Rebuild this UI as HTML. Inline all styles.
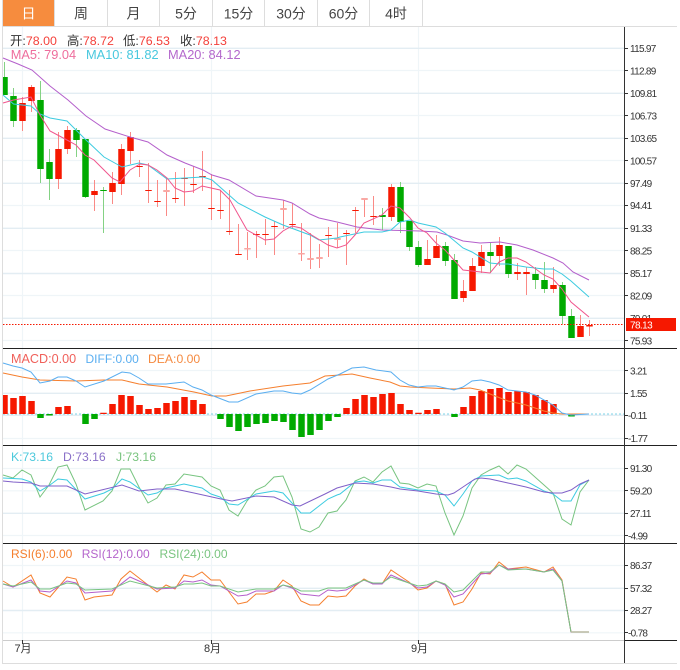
<!DOCTYPE html>
<html><head><meta charset="utf-8"><style>
html,body{margin:0;padding:0;background:#fff;width:680px;height:670px;overflow:hidden}
svg{display:block}
text{font-family:"Liberation Sans","Noto Sans CJK SC",sans-serif}
.t{font-size:14px;fill:#444;text-anchor:middle}
.a text,.a{font-size:10px;fill:#333;letter-spacing:-.7px}
.h{font-size:12px}
.g1{stroke:#e3edf3;stroke-width:1.4;fill:none}
.g2{stroke:#eff5f8;stroke-width:1.2;fill:none}
polyline{fill:none;stroke-width:1}
</style></head><body>
<svg width="680" height="670" viewBox="0 0 680 670" xmlns="http://www.w3.org/2000/svg">
<rect width="680" height="670" fill="#fff"/>
<!-- tabs -->
<rect x="3" y="0" width="51" height="26" fill="#f68c3e"/>
<path d="M54.5 0V26M107.5 0V26M159.5 0V26M212.5 0V26M264.5 0V26M317.5 0V26M369.5 0V26M422.5 0V26" stroke="#ddd" fill="none"/>
<path d="M2.5 0V663.5H677M2 26.5H677" stroke="#ddd" fill="none"/>
<text class="t" x="28.5" y="18.5" style="fill:#fff">日</text>
<text class="t" x="81" y="18.5">周</text>
<text class="t" x="133.5" y="18.5">月</text>
<text class="t" x="186" y="18.5">5分</text>
<text class="t" x="238.5" y="18.5">15分</text>
<text class="t" x="291" y="18.5">30分</text>
<text class="t" x="343.5" y="18.5">60分</text>
<text class="t" x="396" y="18.5">4时</text>
<!-- grid -->
<path class="g2" d="M22.5 27V640M211.5 27V640M418.5 27V640"/>
<path class="g1" d="M3 48.3H624M3 93.3H624M3 138.3H624M3 183.3H624M3 228.3H624M3 273.5H624M3 318.3H624M3 393.3H624M3 415.3H624M3 513.3H624M3 588.3H624M3 610.5H624"/>
<path class="g2" d="M3 70.5H624M3 115.5H624M3 160.5H624M3 205.5H624M3 250.5H624M3 295.5H624M3 340.5H624M3 370.5H624M3 438.5H624M3 468.5H624M3 490.8H624M3 535.5H624M3 565.5H624M3 632.8H624"/>
<!-- wicks -->
<path stroke="#fa8a86" fill="none" d="M22.5 97V131M31.5 85V112M58.5 132V189M67.5 126V154M94.5 180V211M112.5 172V204M121.5 144V195M130.5 132V164M139.5 160V177M148.5 163V203M157.5 180V207M166.5 178V216M175.5 172V203M184.5 168V206M193.5 166V193M202.5 151V191M211.5 174V220M220.5 190V219M229.5 190V235M238.5 224V254M247.5 232V260M256.5 231V258M265.5 219V245M274.5 221V255M283.5 200V229M292.5 203V229M301.5 223V261M310.5 233V269M319.5 244V268M328.5 227V257M337.5 223V248M346.5 230V265M355.5 207V233M364.5 199V217M373.5 196V225M391.5 184V221M427.5 240V265M436.5 235V258M463.5 280V302M472.5 258V291M481.5 245V273M499.5 237V266M517.5 263V280M526.5 267V295M553.5 267V293M580.5 315V337M589.5 320V336"/>
<path stroke="#84d284" fill="none" d="M4.5 62V95M13.5 88V127M40.5 81V183M49.5 149V200M76.5 128V157M85.5 139V198M103.5 187V233M382.5 208V230M400.5 182V233M409.5 221V251M418.5 241V267M445.5 242V266M454.5 254V299M490.5 243V273M508.5 246V278M535.5 267V289M544.5 262V293M562.5 282V324M571.5 309V338"/>
<!-- bodies -->
<path fill="#f61800" d="M19.25 103h6.5v18h-6.5zM28.25 87h6.5v14h-6.5zM55.25 149h6.5v30h-6.5zM64.25 130h6.5v19h-6.5zM91.25 191h6.5v4h-6.5zM109.25 183h6.5v9h-6.5zM118.25 149h6.5v35h-6.5zM127.25 137h6.5v14h-6.5zM388.25 187h6.5v30h-6.5zM424.25 259h6.5v6h-6.5zM433.25 246h6.5v12h-6.5zM460.25 291h6.5v7h-6.5zM469.25 266h6.5v25h-6.5zM478.25 252h6.5v14h-6.5zM496.25 245h6.5v11h-6.5zM514.25 272h6.5v2h-6.5zM523.25 272h6.5v2h-6.5zM550.25 285h6.5v4h-6.5zM577.25 326h6.5v11h-6.5zM586.25 325h6.5v1.5h-6.5z
M136.25 166h6.5v1h-6.5zM145.25 190h6.5v1h-6.5zM154.25 201h6.5v1h-6.5zM172.25 198h6.5v1h-6.5zM181.25 178h6.5v1h-6.5zM190.25 184h6.5v1h-6.5zM199.25 176h6.5v1h-6.5zM208.25 208h6.5v1h-6.5zM217.25 210h6.5v1h-6.5zM226.25 231h6.5v1h-6.5zM235.25 254h6.5v1h-6.5zM253.25 234h6.5v1h-6.5zM262.25 234h6.5v1h-6.5zM271.25 226h6.5v1h-6.5zM289.25 224h6.5v1h-6.5zM325.25 235h6.5v1h-6.5zM343.25 233h6.5v1h-6.5zM352.25 210h6.5v1h-6.5zM370.25 216h6.5v1h-6.5z"/>
<path fill="#f9a8a4" d="M163.25 190h6.5v2h-6.5zM244.25 248h6.5v1.5h-6.5zM280.25 208h6.5v2h-6.5zM298.25 253h6.5v1.5h-6.5zM307.25 258h6.5v2h-6.5zM316.25 257h6.5v2h-6.5zM334.25 238h6.5v2h-6.5zM361.25 198h6.5v2h-6.5z"/>
<path fill="#00aa00" d="M3 77h4.75v18h-4.75zM10.25 96h6.5v25h-6.5zM37.25 100h6.5v69h-6.5zM46.25 162h6.5v17h-6.5zM73.25 130h6.5v10h-6.5zM82.25 139h6.5v58h-6.5zM100.25 190h6.5v1h-6.5zM379.25 215h6.5v2h-6.5zM397.25 187h6.5v35h-6.5zM406.25 221h6.5v26h-6.5zM415.25 247h6.5v18h-6.5zM442.25 246h6.5v15h-6.5zM451.25 260h6.5v39h-6.5zM487.25 252h6.5v4h-6.5zM505.25 246h6.5v28h-6.5zM532.25 274h6.5v6h-6.5zM541.25 280h6.5v9h-6.5zM559.25 285h6.5v31h-6.5zM568.25 316h6.5v22h-6.5z"/>
<!-- MAs -->
<polyline stroke="#b45fcb" points="3,58 18,64 32,70 50,86 68,100 86,116 105,129 130,137 148,142 167,155 185,163 203,170 212,175 229,180 256,196 283,200 292,203 310,214 319,218 337,222 357,227 382,230 420,231 437,232 447,235 463,241 480,243 500,242 517,245 533,250 553,258 563,263 573,272 589,280"/>
<polyline stroke="#3ccbe0" points="3,95 13.5,104 31,106 40,114 50,118 67,121 76,130 85,139 104,157 122,167 139,163 148,165 167,179 185,178 203,177 212,180 229,195 238,203 265,217 283,225 310,235 319,240 337,238 340,237 364,232 382,232 391,230 400,222 410,220 418,223 436,227 445,233 463,248 472,252 490,263 500,264 508,264 526,267 544,269 553,269 562,274 571,281 589,297"/>
<polyline stroke="#f0558d" points="3,103 13.5,100 31,97 40,115 50,131 67,140 76,145 85,155 94,160 104,170 112,178 120,182 130,170 140,164 148,165 157,170 167,178 175,188 184,192 193,191 202,186 211,188 220,190 230,200 247,230 265,240 274,239 283,231 292,226 301,228 310,234 328,245 337,248 346,245 355,235 364,223 382,215 391,206 400,208 410,218 418,228 427,233 436,243 445,250 454,260 463,270 481,272 490,273 499,262 508,258 517,258 526,262 544,275 553,279 562,289 571,302 589,317"/>
<path stroke="#f61800" stroke-dasharray="1.5 1.5" d="M3 324.5H625" fill="none"/>
<!-- MACD -->
<path stroke="#7fd4e8" stroke-dasharray="2 2" d="M3 414H625" fill="none"/>
<path fill="#f61800" d="M3 395h4.75v19h-4.75zM10.25 398h6.5v16h-6.5zM19.25 396h6.5v18h-6.5zM28.25 401h6.5v13h-6.5zM55.25 407h6.5v7h-6.5zM64.25 406h6.5v8h-6.5zM100.25 412.7h6.5v1.3h-6.5zM109.25 404h6.5v10h-6.5zM118.25 395h6.5v19h-6.5zM127.25 396h6.5v18h-6.5zM136.25 405h6.5v9h-6.5zM145.25 409h6.5v5h-6.5zM154.25 408h6.5v6h-6.5zM163.25 403h6.5v11h-6.5zM172.25 401h6.5v13h-6.5zM181.25 397h6.5v17h-6.5zM190.25 400h6.5v14h-6.5zM199.25 404h6.5v10h-6.5zM343.25 408h6.5v6h-6.5zM352.25 399h6.5v15h-6.5zM361.25 395h6.5v19h-6.5zM370.25 397h6.5v17h-6.5zM379.25 394h6.5v20h-6.5zM388.25 393h6.5v21h-6.5zM397.25 404h6.5v10h-6.5zM406.25 410h6.5v4h-6.5zM415.25 412.7h6.5v1.3h-6.5zM424.25 410h6.5v4h-6.5zM433.25 409h6.5v5h-6.5zM460.25 407h6.5v7h-6.5zM469.25 396h6.5v18h-6.5zM478.25 391h6.5v23h-6.5zM487.25 389h6.5v25h-6.5zM496.25 388h6.5v26h-6.5zM505.25 392h6.5v22h-6.5zM514.25 391h6.5v23h-6.5zM523.25 392h6.5v22h-6.5zM532.25 395h6.5v19h-6.5zM541.25 400h6.5v14h-6.5zM550.25 404h6.5v10h-6.5z"/>
<path fill="#00aa00" d="M37.25 414h6.5v4h-6.5zM46.25 414h6.5v1.5h-6.5zM82.25 414h6.5v10h-6.5zM91.25 414h6.5v5h-6.5zM217.25 414h6.5v5h-6.5zM226.25 414h6.5v13h-6.5zM235.25 414h6.5v17h-6.5zM244.25 414h6.5v13h-6.5zM253.25 414h6.5v10h-6.5zM262.25 414h6.5v9h-6.5zM271.25 414h6.5v7h-6.5zM280.25 414h6.5v8h-6.5zM289.25 414h6.5v16h-6.5zM298.25 414h6.5v23h-6.5zM307.25 414h6.5v21h-6.5zM316.25 414h6.5v16h-6.5zM325.25 414h6.5v7h-6.5zM334.25 414h6.5v3h-6.5zM451.25 414h6.5v3h-6.5zM568.25 414h6.5v2.5h-6.5z"/>
<polyline stroke="#f57f2e" points="3,373 22,377 40,380 76,381 104,380 122,380 139,384 167,387 194,392 212,396 226,396 250,391 283,386 310,383 325,376 340,375 352,374 370,378 390,382 400,386 410,387 430,388 454,389 470,388 480,390 490,394 508,401 526,405 544,411 553,413 562,414 589,414"/>
<polyline stroke="#5aaef0" points="3,363 13,366 22,368 31,372 40,383 50,381 58,377 67,377 76,381 85,387 104,381 122,372 130,373 139,378 148,384 166,384 184,382 193,387 202,390 211,395 229,402 238,402 256,394 274,391 283,391 292,393 301,394 310,390 328,379 340,374 352,368 364,367 376,370 391,372 400,380 409,385 418,387 427,386 436,386 445,388 454,390 463,387 472,381 481,380 490,382 499,385 508,390 526,392 535,395 553,405 562,413 571,415 589,414"/>
<!-- KDJ -->
<polyline stroke="#78c480" points="3,475 13,478 22,470 31,475 40,497 49,485 58,467 67,465 76,484 85,510 103,501 112,491 121,469 130,469 139,487 148,503 157,498 166,485 175,484 184,474 202,477 211,486 220,490 229,510 238,516 247,501 256,490 265,486 274,477 283,476 292,497 301,529 310,532 319,527 328,513 337,511 340,507 346,500 355,481 364,477 373,482 382,472 391,466 400,483 409,484 418,488 427,484 436,486 445,513 454,535 463,516 472,488 481,475 490,470 499,466 508,474 517,465 526,469 544,485 553,493 562,519 571,525 580,492 589,480"/>
<polyline stroke="#3ccbe0" points="3,478 22,479 31,482 40,491 50,485 58,479 67,480 85,499 104,493 112,489 122,479 130,482 148,495 157,493 166,488 184,484 202,488 211,494 220,497 229,504 238,505 256,494 274,491 283,493 301,513 310,513 328,499 337,495 340,494 355,482 364,481 373,483 382,480 391,480 400,487 418,490 436,491 445,495 454,506 463,494 472,481 481,476 499,475 508,479 517,478 526,481 544,491 553,494 562,501 571,501 580,485 589,480"/>
<polyline stroke="#8060c8" stroke-width="1.2" points="3,481 13,482 31,483 40,486 67,486 85,494 122,485 139,491 157,489 175,489 194,493 221,499 232,501 256,496 274,497 292,505 300,506 325,494 337,488 355,483 373,484 391,487 400,489 418,491 436,494 448,495 454,493 463,487 475,479 481,478 490,479 508,483 526,487 544,492 553,493 562,493 571,490 580,484 589,480"/>
<!-- RSI -->
<polyline stroke="#f57f2e" points="3,581 13,587 31,575 40,593 50,597 67,577 76,579 85,600 94,597 112,595 121,579 130,571 139,578 157,592 166,585 175,589 184,575 193,577 202,572 211,580 220,580 238,604 247,602 256,594 265,594 274,591 283,580 292,586 301,601 310,605 319,605 328,596 337,597 346,596 355,586 364,579 373,584 382,584 391,570 400,576 409,582 418,590 427,588 436,581 445,584 454,605 463,602 472,589 481,573 490,574 499,562 508,569 526,567 544,572 553,567 562,580 571,632 589,632"/>
<polyline stroke="#b45fcb" points="3,584 13,587 31,580 40,591 50,592 67,581 76,583 85,593 112,591 130,577 157,589 175,588 184,581 193,582 202,580 211,585 220,586 238,596 247,595 256,591 274,591 283,585 292,588 301,594 319,596 328,590 337,591 346,590 364,580 373,584 382,584 391,575 409,583 418,588 427,587 436,581 445,585 454,597 463,594 481,574 490,573 499,565 508,569 526,569 544,572 553,569 562,581 571,632 589,632"/>
<polyline stroke="#78c480" points="3,584 13,586 31,582 40,589 50,589 67,583 76,584 85,590 112,589 130,581 157,588 175,587 184,584 193,584 202,583 211,586 220,586 238,592 256,589 274,589 283,585 292,587 301,591 319,591 328,588 337,588 346,588 364,580 373,583 382,583 391,577 409,583 418,586 427,585 436,581 445,584 454,592 463,590 481,572 490,572 499,565 508,570 526,569 544,572 553,570 562,581 571,632"/>
<path stroke="#b8b8a0" stroke-width="1.6" d="M571 632H589" fill="none"/>
<!-- axes -->
<path stroke="#ccc" d="M3 640.5H624" fill="none"/>
<path stroke="#222" d="M3 348.5H677M3 445.5H677M3 543.5H677M625 640.5H677" fill="none"/>
<path stroke="#333" d="M624.5 27V663" fill="none"/>
<path stroke="#333" d="M625 48.5h3M625 70.5h3M625 93.5h3M625 115.5h3M625 138.5h3M625 160.5h3M625 183.5h3M625 205.5h3M625 228.5h3M625 250.5h3M625 273.5h3M625 295.5h3M625 340.5h3M625 370.5h3M625 393.5h3M625 415.5h3M625 438.5h3M625 468.5h3M625 490.5h3M625 513.5h3M625 535.5h3M625 565.5h3M625 588.5h3M625 610.5h3M625 632.5h3" fill="none"/>
<path stroke="#333" d="M22.5 640v4M211.5 640v4M418.5 640v4" fill="none"/>
<g class="a">
<text x="630" y="52">115.97</text><text x="630" y="74.5">112.89</text><text x="630" y="97">109.81</text><text x="630" y="119.5">106.73</text><text x="630" y="142">103.65</text><text x="630" y="164.5">100.57</text><text x="630" y="187">97.49</text><text x="630" y="209">94.41</text><text x="630" y="232">91.33</text><text x="630" y="254.5">88.25</text><text x="630" y="277">85.17</text><text x="630" y="299.5">82.09</text><text x="630" y="322">79.01</text><text x="630" y="344.5">75.93</text>
<text x="630" y="374.5">3.21</text><text x="630" y="397">1.55</text><text x="628" y="419">-0.11</text><text x="628" y="442">-1.77</text>
<text x="630" y="472">91.30</text><text x="630" y="494.5">59.20</text><text x="630" y="517">27.11</text><text x="628" y="539.5">-4.99</text>
<text x="630" y="569">86.37</text><text x="630" y="592">57.32</text><text x="630" y="614">28.27</text><text x="628" y="636.5">-0.78</text>
</g>
<rect x="626" y="318" width="50" height="13" fill="#f61800"/>
<text x="630" y="328.5" style="font-size:10px;letter-spacing:-.6px;fill:#fff">78.13</text>
<!-- headers -->
<g class="h">
<g style="font-size:12.4px">
<text x="10" y="45" fill="#333">开:<tspan fill="#f4403a">78.00</tspan></text>
<text x="67" y="45" fill="#333">高:<tspan fill="#f4403a">78.72</tspan></text>
<text x="123" y="45" fill="#333">低:<tspan fill="#f4403a">76.53</tspan></text>
<text x="180" y="45" fill="#333">收:<tspan fill="#f4403a">78.13</tspan></text>
</g>
<g style="font-size:12.8px">
<text x="10.7" y="59" fill="#ee6d9c">MA5: 79.04</text>
<text x="86" y="59" fill="#48c8de">MA10: 81.82</text>
<text x="168" y="59" fill="#b468cc">MA20: 84.12</text>
</g>
<text x="11" y="363" fill="#f0605a" style="font-size:12.6px">MACD:0.00</text>
<text x="85.5" y="363" fill="#5aaef0">DIFF:0.00</text>
<text x="148" y="363" fill="#f58a40" style="font-size:12.2px">DEA:0.00</text>
<text x="11" y="461" fill="#4dc9dc" style="font-size:12.2px">K:73.16</text>
<text x="63" y="461" fill="#8a70c8" style="font-size:12.2px">D:73.16</text>
<text x="116" y="461" fill="#79c47f" style="font-size:12.2px">J:73.16</text>
<text x="11" y="558" fill="#f57f2e">RSI(6):0.00</text>
<text x="81.7" y="558" fill="#b565cc">RSI(12):0.00</text>
<text x="159.5" y="558" fill="#79c47f">RSI(24):0.00</text>
</g>
<g style="font-size:11px" fill="#333" text-anchor="middle">
<text x="23" y="652">7月</text><text x="212.5" y="652">8月</text><text x="419.5" y="652">9月</text>
</g>
</svg>
</body></html>
